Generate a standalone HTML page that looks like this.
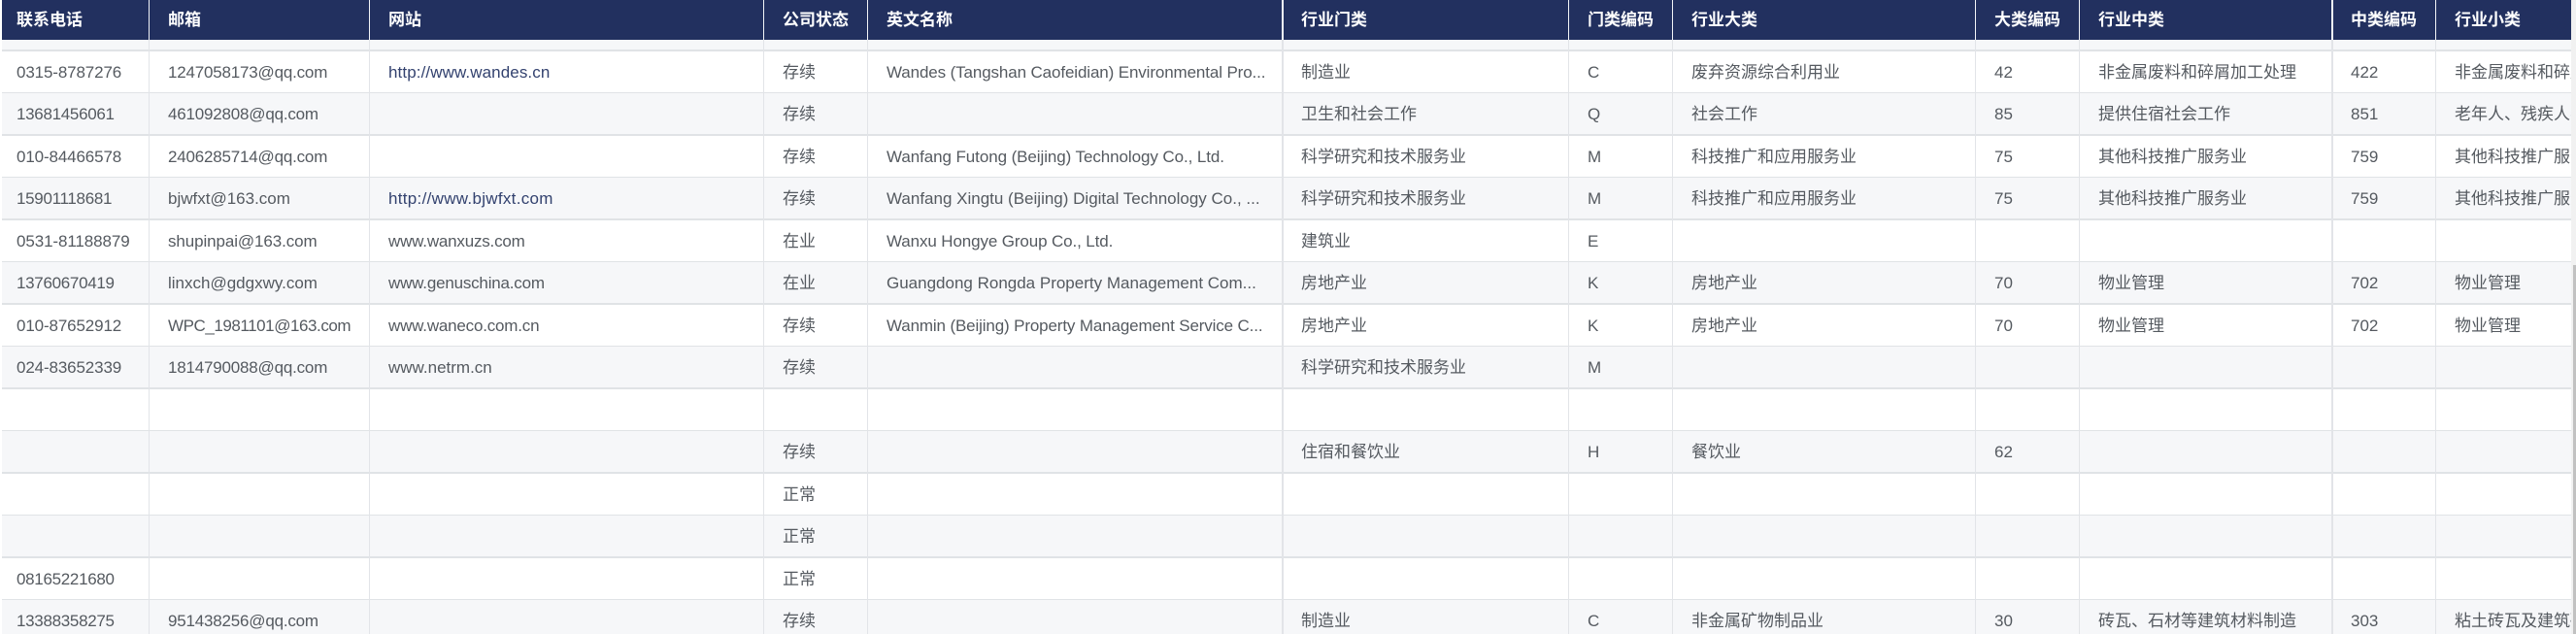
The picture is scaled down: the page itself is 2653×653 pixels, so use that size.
<!DOCTYPE html>
<html lang="zh-CN">
<head>
<meta charset="utf-8">
<title>企业列表</title>
<style>
html,body{margin:0;padding:0;background:#fff;width:2653px;height:653px;overflow:hidden}
body{position:relative;font-family:"Liberation Sans","Noto Sans CJK SC",sans-serif;font-size:17px;color:#555a60}
#hd{position:absolute;left:2px;top:0;width:2646px;height:41px;background:#22305f;overflow:hidden;z-index:3}
#hd b{position:absolute;top:0;line-height:41px;color:#fff;font-weight:700;font-size:17px;white-space:nowrap}
.r{position:absolute;left:2px;width:2646px;overflow:hidden;background:#fff}
.s{background:#f6f7f9}
.r span{position:absolute;top:1px;white-space:nowrap;line-height:inherit}
.r a{color:#33426f;text-decoration:none}
.h{position:absolute;left:2px;width:2646px;background:#e0e3e6;z-index:1}
.v{position:absolute;top:41px;height:612px;background:#e2e4e8;z-index:2}
.w{position:absolute;top:0;height:41px;background:#f2f4f7;z-index:4}
.a{left:15px}.b{left:171px}.c{left:398px}.d{left:804px}.e{left:911px}.f{left:1338px}
.g{left:1633px}.i{left:1740px}.j{left:2052px}.k{left:2159px}.l{left:2419px}.m{left:2526px}
</style>
</head>
<body>
<div id="hd">
<b class="a">联系电话</b><b class="b">邮箱</b><b class="c">网站</b><b class="d">公司状态</b><b class="e">英文名称</b><b class="f">行业门类</b><b class="g">门类编码</b><b class="i">行业大类</b><b class="j">大类编码</b><b class="k">行业中类</b><b class="l">中类编码</b><b class="m">行业小类</b>
</div>

<div class="r s" style="top:41px;height:10px"></div>

<div class="r" style="top:53px;height:42px;line-height:42px"><span class="a" style="letter-spacing:-.13px">0315-8787276</span><span class="b" style="letter-spacing:-.2px">1247058173@qq.com</span><span class="c" style="letter-spacing:.1px"><a>http://www.wandes.cn</a></span><span class="d">存续</span><span class="e" style="letter-spacing:-.12px">Wandes (Tangshan Caofeidian) Environmental Pro...</span><span class="f">制造业</span><span class="g">C</span><span class="i">废弃资源综合利用业</span><span class="j">42</span><span class="k">非金属废料和碎屑加工处理</span><span class="l">422</span><span class="m">非金属废料和碎屑加工处理</span></div>

<div class="r s" style="top:96px;height:42px;line-height:42px"><span class="a" style="letter-spacing:-.3px">13681456061</span><span class="b" style="letter-spacing:-.2px">461092808@qq.com</span><span class="d">存续</span><span class="f">卫生和社会工作</span><span class="g">Q</span><span class="i">社会工作</span><span class="j">85</span><span class="k">提供住宿社会工作</span><span class="l">851</span><span class="m">老年人、残疾人养护服务</span></div>

<div class="r" style="top:140px;height:42px;line-height:42px"><span class="a" style="letter-spacing:-.13px">010-84466578</span><span class="b" style="letter-spacing:-.2px">2406285714@qq.com</span><span class="d">存续</span><span class="e" style="letter-spacing:-.08px">Wanfang Futong (Beijing) Technology Co., Ltd.</span><span class="f">科学研究和技术服务业</span><span class="g">M</span><span class="i">科技推广和应用服务业</span><span class="j">75</span><span class="k">其他科技推广服务业</span><span class="l">759</span><span class="m">其他科技推广服务业</span></div>

<div class="r s" style="top:183px;height:42px;line-height:42px"><span class="a" style="letter-spacing:-.3px">15901118681</span><span class="b">bjwfxt@163.com</span><span class="c" style="letter-spacing:.3px"><a>http://www.bjwfxt.com</a></span><span class="d">存续</span><span class="e">Wanfang Xingtu (Beijing) Digital Technology Co., ...</span><span class="f">科学研究和技术服务业</span><span class="g">M</span><span class="i">科技推广和应用服务业</span><span class="j">75</span><span class="k">其他科技推广服务业</span><span class="l">759</span><span class="m">其他科技推广服务业</span></div>

<div class="r" style="top:227px;height:42px;line-height:42px"><span class="a" style="letter-spacing:-.1px">0531-81188879</span><span class="b" style="letter-spacing:-.1px">shupinpai@163.com</span><span class="c" style="letter-spacing:-.2px">www.wanxuzs.com</span><span class="d">在业</span><span class="e" style="letter-spacing:-.12px">Wanxu Hongye Group Co., Ltd.</span><span class="f">建筑业</span><span class="g">E</span></div>

<div class="r s" style="top:270px;height:42px;line-height:42px"><span class="a" style="letter-spacing:-.3px">13760670419</span><span class="b">linxch@gdgxwy.com</span><span class="c" style="letter-spacing:-.2px">www.genuschina.com</span><span class="d">在业</span><span class="e">Guangdong Rongda Property Management Com...</span><span class="f">房地产业</span><span class="g">K</span><span class="i">房地产业</span><span class="j">70</span><span class="k">物业管理</span><span class="l">702</span><span class="m">物业管理</span></div>

<div class="r" style="top:314px;height:42px;line-height:42px"><span class="a" style="letter-spacing:-.13px">010-87652912</span><span class="b" style="letter-spacing:-.44px">WPC_1981101@163.com</span><span class="c" style="letter-spacing:-.2px">www.waneco.com.cn</span><span class="d">存续</span><span class="e" style="letter-spacing:-.14px">Wanmin (Beijing) Property Management Service C...</span><span class="f">房地产业</span><span class="g">K</span><span class="i">房地产业</span><span class="j">70</span><span class="k">物业管理</span><span class="l">702</span><span class="m">物业管理</span></div>

<div class="r s" style="top:357px;height:42px;line-height:42px"><span class="a" style="letter-spacing:-.13px">024-83652339</span><span class="b" style="letter-spacing:-.2px">1814790088@qq.com</span><span class="c">www.netrm.cn</span><span class="d">存续</span><span class="f">科学研究和技术服务业</span><span class="g">M</span></div>

<div class="r" style="top:401px;height:42px;line-height:42px"></div>

<div class="r s" style="top:444px;height:42px;line-height:42px"><span class="d">存续</span><span class="f">住宿和餐饮业</span><span class="g">H</span><span class="i">餐饮业</span><span class="j">62</span></div>

<div class="r" style="top:488px;height:42px;line-height:42px"><span class="d">正常</span></div>

<div class="r s" style="top:531px;height:42px;line-height:42px"><span class="d">正常</span></div>

<div class="r" style="top:575px;height:42px;line-height:42px"><span class="a" style="letter-spacing:-.3px">08165221680</span><span class="d">正常</span></div>

<div class="r s" style="top:618px;height:35px;line-height:42px"><span class="a" style="letter-spacing:-.3px">13388358275</span><span class="b" style="letter-spacing:-.2px">951438256@qq.com</span><span class="d">存续</span><span class="f">制造业</span><span class="g">C</span><span class="i">非金属矿物制品业</span><span class="j">30</span><span class="k">砖瓦、石材等建筑材料制造</span><span class="l">303</span><span class="m">粘土砖瓦及建筑砌块制造</span></div>

<div class="h" style="top:51px;height:2px"></div>
<div class="h" style="top:95px;height:1px"></div>
<div class="h" style="top:138px;height:2px"></div>
<div class="h" style="top:182px;height:1px"></div>
<div class="h" style="top:225px;height:2px"></div>
<div class="h" style="top:269px;height:1px"></div>
<div class="h" style="top:312px;height:2px"></div>
<div class="h" style="top:356px;height:1px"></div>
<div class="h" style="top:399px;height:2px"></div>
<div class="h" style="top:443px;height:1px"></div>
<div class="h" style="top:486px;height:2px"></div>
<div class="h" style="top:530px;height:1px"></div>
<div class="h" style="top:573px;height:2px"></div>
<div class="h" style="top:617px;height:1px"></div>

<div class="v" style="left:153px;width:1px"></div>
<div class="v" style="left:380px;width:1px"></div>
<div class="v" style="left:786px;width:1px"></div>
<div class="v" style="left:893px;width:1px"></div>
<div class="v" style="left:1320px;width:2px"></div>
<div class="v" style="left:1615px;width:1px"></div>
<div class="v" style="left:1722px;width:1px"></div>
<div class="v" style="left:2034px;width:1px"></div>
<div class="v" style="left:2141px;width:1px"></div>
<div class="v" style="left:2401px;width:2px"></div>
<div class="v" style="left:2508px;width:1px"></div>

<div class="w" style="left:153px;width:1px"></div>
<div class="w" style="left:380px;width:1px"></div>
<div class="w" style="left:786px;width:1px"></div>
<div class="w" style="left:893px;width:1px"></div>
<div class="w" style="left:1320px;width:2px"></div>
<div class="w" style="left:1615px;width:1px"></div>
<div class="w" style="left:1722px;width:1px"></div>
<div class="w" style="left:2034px;width:1px"></div>
<div class="w" style="left:2141px;width:1px"></div>
<div class="w" style="left:2401px;width:2px"></div>
<div class="w" style="left:2508px;width:1px"></div>

<div style="position:absolute;left:2648px;top:0;width:5px;height:653px;background:#f1f1f1;z-index:5"></div>
<div style="position:absolute;left:2650px;top:273px;width:3px;height:380px;background:#c1c1c1;z-index:6"></div>
</body>
</html>
